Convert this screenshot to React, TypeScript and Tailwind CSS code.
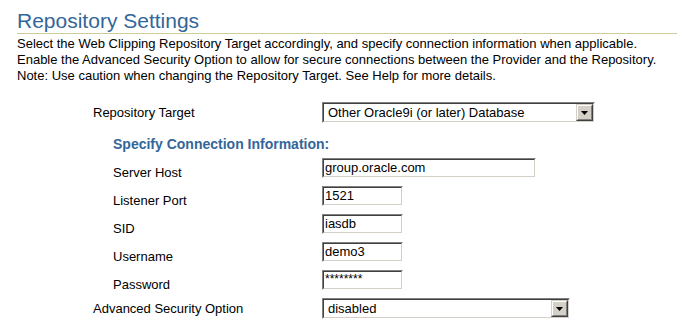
import React from "react";

function Inset({ w, h, children }: { w: number; h: number; children: React.ReactNode }) {
  return (
    <div
      className="border border-t-[#808080] border-l-[#808080] border-b-white border-r-white box-border"
      style={{ width: w, height: h }}
    >
      <div className="h-full w-full border border-t-[#404040] border-l-[#404040] border-b-[#d4d0c8] border-r-[#d4d0c8] bg-white box-border flex items-center overflow-hidden">
        {children}
      </div>
    </div>
  );
}

function TextBox({ w, value, password }: { w: number; value: string; password?: boolean }) {
  return (
    <Inset w={w} h={20}>
      {password ? (
        <span className="self-start pl-[1px] pt-[1px] text-[12px] leading-[12px]">{value}</span>
      ) : (
        <span className="pl-[1px] text-[13px] leading-[16px] whitespace-nowrap">{value}</span>
      )}
    </Inset>
  );
}

function SelectBox({ w, h, value }: { w: number; h: number; value: string }) {
  return (
    <Inset w={w} h={h}>
      <span className="flex-1 pl-[4px] text-[13px] leading-[16px] whitespace-nowrap">{value}</span>
      <div className="h-full w-[17px] border border-t-[#d4d0c8] border-l-[#d4d0c8] border-b-[#404040] border-r-[#404040] box-border">
        <div className="h-full w-full border border-t-white border-l-white border-b-[#808080] border-r-[#808080] bg-[#d4d0c8] box-border flex items-center justify-center">
          <svg width="7" height="4" viewBox="0 0 7 4">
            <polygon points="0,0 7,0 3.5,4" fill="#000" />
          </svg>
        </div>
      </div>
    </Inset>
  );
}

export default function App() {
  const rows: { label: string; w: number; value: string; password?: boolean }[] = [
    { label: "Server Host", w: 214, value: "group.oracle.com" },
    { label: "Listener Port", w: 81, value: "1521" },
    { label: "SID", w: 81, value: "iasdb" },
    { label: "Username", w: 81, value: "demo3" },
    { label: "Password", w: 81, value: "********", password: true },
  ];
  return (
    <div className="min-h-[324px] w-[677px] bg-white pl-[17px] pt-[9px] font-['Liberation_Sans',Arial,sans-serif] text-black">
      <div className="h-[25px] border-b border-[#cccc99] text-[21px] leading-[24px] text-[#336699]">
        Repository Settings
      </div>
      <div className="mt-[2px] text-[13px] leading-[16px] whitespace-nowrap">
        <div>Select the Web Clipping Repository Target accordingly, and specify connection information when applicable.</div>
        <div>Enable the Advanced Security Option to allow for secure connections between the Provider and the Repository.</div>
        <div>Note: Use caution when changing the Repository Target. See Help for more details.</div>
      </div>
      <div className="mt-[18px] pl-[76px] text-[13px] leading-[16px]">
        <div className="flex h-[21px] items-center">
          <div className="w-[229px]">Repository Target</div>
          <SelectBox w={273} h={21} value="Other Oracle9i (or later) Database" />
        </div>
        <div className="mt-[13px] h-[16px] pl-[20px] text-[14px] font-bold leading-[16px] text-[#336699]">
          Specify Connection Information:
        </div>
        <div className="mt-[6px]">
          {rows.map((r) => (
            <div key={r.label} className="flex h-[28px] items-start">
              <div className="w-[229px] pl-[20px] pt-[7px]">{r.label}</div>
              <TextBox w={r.w} value={r.value} password={r.password} />
            </div>
          ))}
        </div>
        <div className="flex h-[21px] items-center">
          <div className="w-[229px]">Advanced Security Option</div>
          <SelectBox w={248} h={21} value="disabled" />
        </div>
      </div>
    </div>
  );
}
